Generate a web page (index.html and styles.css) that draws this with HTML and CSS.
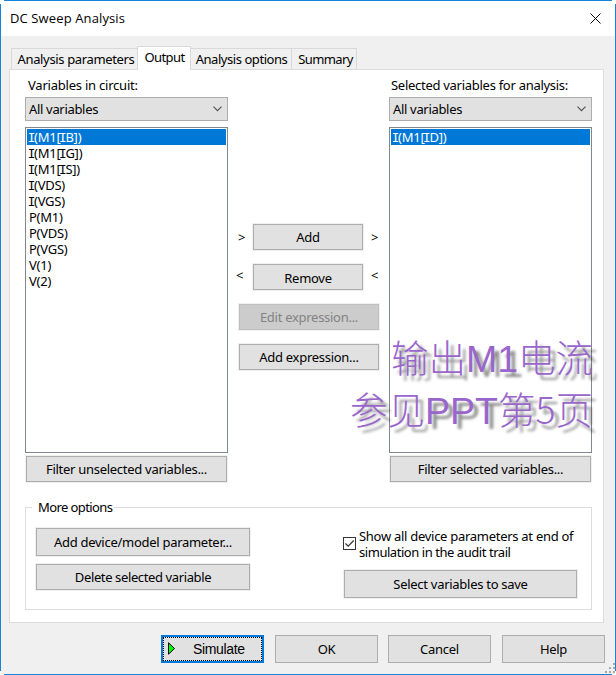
FILE: index.html
```html
<!DOCTYPE html>
<html lang="en">
<head>
<meta charset="utf-8">
<title>DC Sweep Analysis</title>
<link rel="stylesheet" href="styles.css">
</head>
<body>
<main class="window">
  <header class="titlebar">
    <h1 class="title">DC Sweep Analysis</h1>
    <svg class="close" width="11" height="11" viewBox="0 0 11 11"><path d="M.5 .5l10 10M10.5 .5l-10 10" stroke="#000" fill="none"/></svg>
  </header>
  <nav class="tabs">
    <span class="tab tab-params">Analysis parameters</span>
    <span class="tab active">Output</span>
    <span class="tab tab-options">Analysis options</span>
    <span class="tab tab-summary">Summary</span>
  </nav>
  <section class="pane">
    <div class="columns">
      <div class="column">
        <label class="label">Variables in circuit:</label>
        <div class="select"><span>All variables</span><svg width="9" height="6" viewBox="0 0 9 6"><path d="M.5 .7l4 4 4-4" stroke="#505050" fill="none" stroke-width="1.1"/></svg></div>
        <ul class="list">
          <li class="selected"><i>I</i>(M1[<i>I</i>B])</li>
          <li><i>I</i>(M1[<i>I</i>G])</li>
          <li><i>I</i>(M1[<i>I</i>S])</li>
          <li><i>I</i>(VDS)</li>
          <li><i>I</i>(VGS)</li>
          <li>P(M1)</li>
          <li>P(VDS)</li>
          <li>P(VGS)</li>
          <li>V(1)</li>
          <li>V(2)</li>
        </ul>
        <button class="btn filter">Filter unselected variables...</button>
      </div>
      <div class="actions">
        <div class="move"><span>&gt;</span><button class="btn">Add</button><span>&gt;</span></div>
        <div class="move remove"><span>&lt;</span><button class="btn">Remove</button><span>&lt;</span></div>
        <button class="btn wide disabled">Edit expression...</button>
        <button class="btn wide">Add expression...</button>
      </div>
      <div class="column">
        <label class="label label-right">Selected variables for analysis:</label>
        <div class="select"><span>All variables</span><svg width="9" height="6" viewBox="0 0 9 6"><path d="M.5 .7l4 4 4-4" stroke="#505050" fill="none" stroke-width="1.1"/></svg></div>
        <ul class="list"><li class="selected"><i>I</i>(M1[<i>I</i>D])</li></ul>
        <button class="btn filter">Filter selected variables...</button>
      </div>
    </div>
    <div class="group">
      <h2 class="legend">More options</h2>
      <div class="group-left">
        <button class="btn tall">Add device/model parameter...</button>
        <button class="btn delete">Delete selected variable</button>
      </div>
      <div class="group-right">
        <label class="check">
          <svg width="13" height="13" viewBox="0 0 13 13"><rect x=".5" y=".5" width="12" height="12" fill="#fff" stroke="#333"/><path d="M2.5 6.5l2.7 2.7 5.5-5.7" fill="none" stroke="#333" stroke-width="1.2"/></svg>
          <span>Show all device parameters at end of<br><span class="second-line">simulation in the audit trail</span></span>
        </label>
        <button class="btn tall">Select variables to save</button>
      </div>
    </div>
  </section>
  <footer class="footer">
    <button class="dlg simulate"><svg width="8" height="13" viewBox="0 0 8 13"><path d="M.5 .8v11.4l6-5.7z" fill="#0f0" stroke="#000"/></svg><span>Simulate</span></button>
    <button class="dlg">OK</button>
    <button class="dlg cancel">Cancel</button>
    <button class="dlg help">Help</button>
  </footer>
  <svg class="grip" width="10" height="10" viewBox="0 0 10 10" fill="#a8a8a8"><path d="M8 0h2v2h-2zM4 4h2v2h-2zM8 4h2v2h-2zM0 8h2v2h-2zM4 8h2v2h-2zM8 8h2v2h-2z"/></svg>
  <div class="note" lang="zh-CN"><div>输出M1电流</div><div>参见PPT第<span class="thin">5</span>页</div></div>
</main>
</body>
</html>
```
FILE: styles.css
```css
* { box-sizing: border-box; }
body { margin: 0; background: #fff; }
.window {
  position: relative; width: 616px; height: 675px;
  border: 1px solid #fff; background: #f0f0f0; background-clip: padding-box; color: #000;
  font: 13px/16px "Noto Sans", "Liberation Sans", sans-serif; letter-spacing: -.28px;
}
.window::before, .window::after { content: ""; position: absolute; pointer-events: none; border: 0 solid #1883d7; }
.window::before { inset: -1px 3px; border-width: 1px 0; }
.window::after { inset: 3px -1px; border-width: 0 1px; }
.titlebar { height: 35px; background: #fff; display: flex; justify-content: space-between; padding: 12px 14px 0 9px; }
.title { margin: -3px 0 0; font: 13px/16px "Open Sans", sans-serif; letter-spacing: .12px; }
.close { display: block; }
.tabs { display: flex; align-items: flex-end; height: 33px; padding-left: 10px; position: relative; }
.tab { height: 21px; border: 1px solid #d9d9d9; border-bottom: 0; padding-top: 2px; text-align: center; white-space: nowrap; }
.tab-params { width: 126px; padding-left: 3px; border-right: 0; letter-spacing: -.35px; }
.tab.active { width: 54px; height: 24px; margin-bottom: -1px; background: #fff; padding-top: 2px; padding-left: 1px; letter-spacing: -.6px; }
.tab-options { width: 101px; border-left: 0; padding-left: 1px; letter-spacing: -.45px; }
.tab-summary { width: 66px; margin-left: -1px; padding-left: 3px; letter-spacing: -.6px; }
.pane { width: 595px; height: 554px; margin-left: 8px; border: 1px solid #dcdcdc; background: #fff; padding: 7px 11px 0 15px; }
.columns { display: flex; }
.column { width: 203px; }
.label { display: block; height: 20px; padding-left: 3px; white-space: nowrap; letter-spacing: -.22px; }
.label-right { padding-left: 2px; letter-spacing: -.28px; }
.select { display: flex; align-items: center; justify-content: space-between; height: 24px; border: 1px solid #adadad; background: #e1e1e1; padding: 0 5px 0 3px; letter-spacing: -.32px; }
.list { list-style: none; margin: 6px 0 3px; padding: 1px; height: 326px; border: 1px solid #828790; letter-spacing: -.25px; }
.list li { height: 16px; padding-left: 2px; }
.list i { display: inline-block; width: 5px; text-indent: -1.3px; font: 12.5px/14px "DejaVu Sans Mono", monospace; letter-spacing: 0; }
.list .selected { background: #0078d7; color: #fff; }
.btn { display: block; height: 26px; border: 1px solid #adadad; background: #e1e1e1; outline: 1px solid #f0f0f0; padding: 0; margin: 0; font: inherit; letter-spacing: inherit; color: #000; white-space: nowrap; }
.filter { width: 201px; margin: 0 1px; }
.actions { width: 161px; padding: 147px 0 0 11px; }
.move { display: flex; height: 26px; margin-bottom: 14px; line-height: 26px; }
.move .btn { width: 110px; padding: 0; line-height: 16px; }
.move.remove .btn { padding-top: 1px; }
.move span { width: 15px; margin-left: -1px; }
.move span:last-child { padding-left: 9px; width: 18px; }
.move.remove span { line-height: 23px; }
.move.remove span:first-child { margin-left: -3px; width: 17px; }
.wide { width: 140px; margin-bottom: 14px; }
.disabled { background: #ccc; border-color: #bfbfbf; color: #838383; }
.group { width: 567px; height: 103px; margin-top: 25px; border: 1px solid #dcdcdc; display: grid; grid-template-columns: 307px 234px; grid-template-rows: 24px 1fr; padding-left: 10px; }
.legend { grid-column: 1 / 3; justify-self: start; height: 16px; margin: -9px 0 0 -4px; background: #fff; padding: 0 2px 0 6px; font: inherit; letter-spacing: -.6px; }
.group-left { margin-top: -4px; }
.group-left .btn { width: 214px; }
.tall { height: 28px; }
.group-left .tall { margin-bottom: 8px; }
.delete { letter-spacing: -.38px; }
.check { display: flex; height: 38px; white-space: nowrap; }
.check > svg { margin: 5px 3px 0 0; flex: none; }
.check > span { margin-top: -4px; }
.second-line { letter-spacing: -.45px; }
.group-right .tall { width: 233px; margin-left: 1px; }
.footer { display: flex; padding: 12px 0 0 160px; }
.dlg { flex: none; width: 103px; height: 28px; border: 1px solid #adadad; background: #e1e1e1; font: inherit; letter-spacing: inherit; color: #000; padding: 0; margin-right: 11px; }
.cancel { margin-left: -1px; }
.help { margin-right: 0; }
.simulate { border: 2px solid #0078d7; outline: 1px dotted #000; outline-offset: -3px; display: flex; align-items: center; padding-left: 5px; font: 14px/16px "Liberation Sans", Arial, sans-serif; letter-spacing: -.35px; }
.simulate span { margin: 0 0 0 17px; }
.simulate svg { margin-top: -1px; }
.grip { position: absolute; right: 0; bottom: 1px; }
.note { position: absolute; top: 332px; right: 22px; text-align: right; white-space: nowrap; letter-spacing: 0; color: #96c; text-shadow: 5px 5px 3px rgba(0,0,0,.45); font: 300 37.5px/52px "Liberation Sans", "Noto Sans CJK SC", sans-serif; }
.note div { height: 52px; }
.thin { font-family: "Noto Sans CJK SC", sans-serif; line-height: 1; }
```
